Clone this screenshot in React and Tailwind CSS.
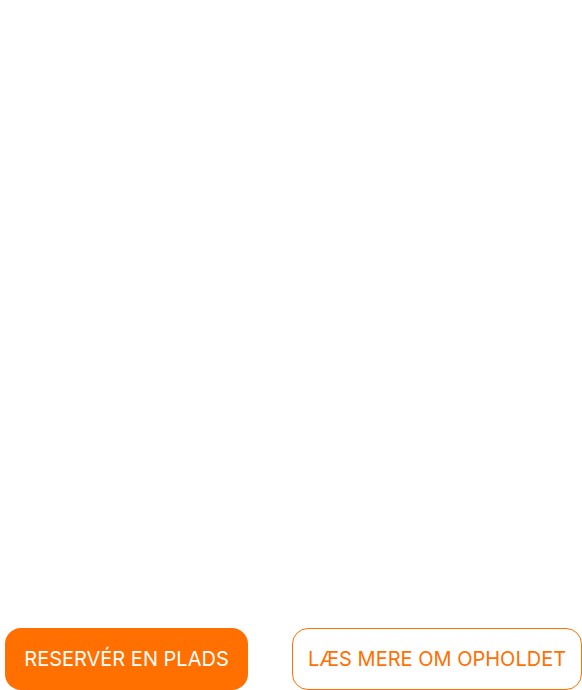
export default function App() {
  return (
    <div className="h-[690px] w-full bg-white flex flex-col justify-end font-['Inter',sans-serif]">
      <div className="flex items-end gap-[44px] pl-[5px]">
        <button className="h-[62px] w-[243px] rounded-[16px] bg-[#ff7000] text-white text-[20px] font-normal flex items-center justify-center">
          RESERVÉR EN PLADS
        </button>
        <button className="h-[62px] w-[290px] rounded-[16px] border border-[#ff7000] bg-white text-[#ff7000] text-[20px] font-normal flex items-center justify-center">
          LÆS MERE OM OPHOLDET
        </button>
      </div>
    </div>
  );
}
